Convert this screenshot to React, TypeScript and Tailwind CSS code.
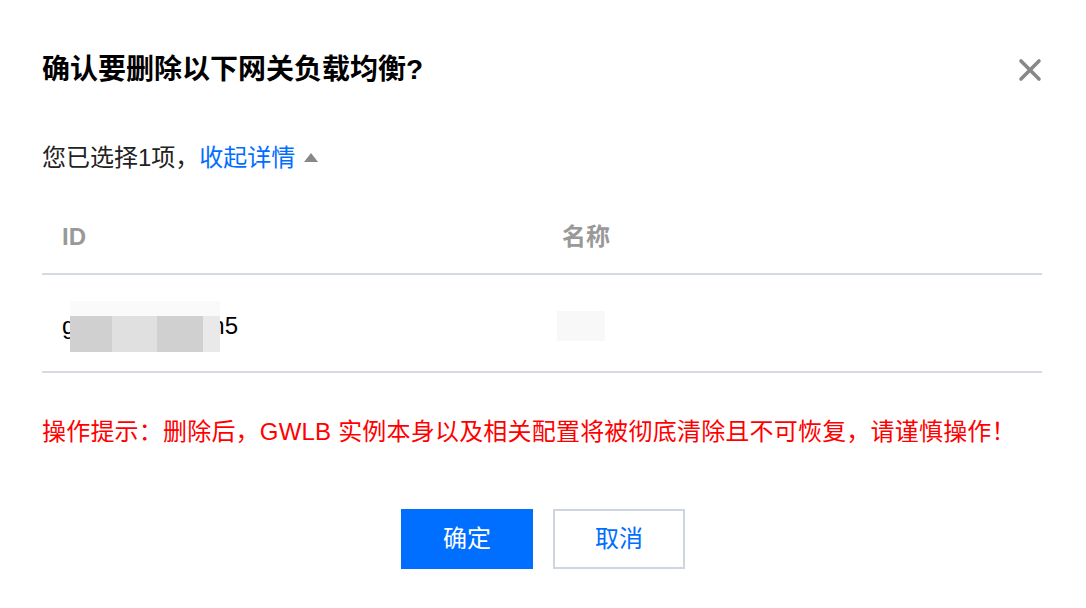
import { X } from "lucide-react";

const FONT = { fontFamily: '"Liberation Sans", "Noto Sans CJK SC", sans-serif' };

export default function App() {
  return (
    <div
      style={FONT}
      className="w-[1086px] h-[608px] bg-white pt-[50px] pl-[42px] pr-[44px] text-[#222]"
    >
      {/* Header */}
      <div className="flex h-[40px] items-center justify-between">
        <h1 className="text-[28px] leading-[40px] font-bold text-black">
          确认要删除以下网关负载均衡?
        </h1>
        <button className="mr-[-6px] text-[#888]">
          <X size={36} strokeWidth={2.4} />
        </button>
      </div>

      {/* Selection summary */}
      <div className="mt-[52px] flex h-[32px] items-center text-[24px] leading-[32px]">
        <span>您已选择1项，</span>
        <span className="text-[#006eff]">收起详情</span>
        <span className="ml-[9px] mt-[-2px] h-0 w-0 border-x-[7px] border-b-[9px] border-x-transparent border-b-[#888]" />
      </div>

      {/* Table */}
      <div className="mt-[26px]">
        <div className="grid h-[75px] grid-cols-2 items-center border-b-[2px] border-[#d6dbe3] text-[24px] font-semibold text-[#999]">
          <div className="px-[20px]">ID</div>
          <div className="px-[20px]">名称</div>
        </div>
        <div className="grid h-[98px] grid-cols-2 items-center border-b-[2px] border-[#d6dbe3] pt-[6px] text-[24px] text-black">
          <div className="flex items-center px-[20px]">
            <span>g</span>
            <span className="relative z-10 ml-[-5px] flex h-[51px] w-[150px] flex-col">
              <span className="h-[15px] bg-[#fafafa]" />
              <span className="flex h-[36px]">
                <span className="w-[42px] bg-[#d0d0d0]" />
                <span className="w-[45px] bg-[#e0e0e0]" />
                <span className="w-[46px] bg-[#d0d0d0]" />
                <span className="w-[17px] bg-[#e9e9e9]" />
              </span>
            </span>
            <span className="ml-[-9px]">n5</span>
          </div>
          <div className="flex items-center px-[15px]">
            <span className="h-[30px] w-[48px] bg-[#f8f8f8]" />
          </div>
        </div>
      </div>

      {/* Warning */}
      <p className="mt-[43px] text-[24px] leading-[32px] tracking-[0.2px] text-[#ff0000]">
        操作提示：删除后，GWLB 实例本身以及相关配置将被彻底清除且不可恢复，请谨慎操作！
      </p>

      {/* Actions */}
      <div className="mt-[61px] flex justify-center gap-[20px] pl-[2px]">
        <button className="h-[60px] w-[132px] bg-[#006eff] text-[24px] text-white">
          确定
        </button>
        <button className="h-[60px] w-[132px] border-[2px] border-[#cfd5de] bg-white text-[24px] text-[#006eff]">
          取消
        </button>
      </div>
    </div>
  );
}
